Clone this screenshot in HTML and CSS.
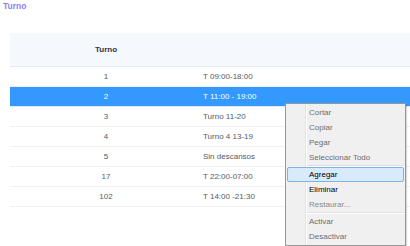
FILE: index.html
```html
<!DOCTYPE html>
<html lang="es">
<head>
<meta charset="utf-8">
<title>Turno</title>
<link rel="stylesheet" href="styles.css">
</head>
<body>
<div class="page">
  <div class="title">Turno</div>
  <div class="grid-wrap">
    <table class="grid">
      <thead>
        <tr><th class="c1">Turno</th><th class="c2"></th></tr>
      </thead>
      <tbody>
        <tr><td class="c1">1</td><td class="c2">T 09:00-18:00</td></tr>
        <tr class="sel"><td class="c1">2</td><td class="c2">T 11:00 - 19:00</td></tr>
        <tr><td class="c1">3</td><td class="c2">Turno 11-20</td></tr>
        <tr><td class="c1">4</td><td class="c2">Turno 4 13-19</td></tr>
        <tr><td class="c1">5</td><td class="c2">Sin descansos</td></tr>
        <tr><td class="c1">17</td><td class="c2">T 22:00-07:00</td></tr>
        <tr><td class="c1">102</td><td class="c2">T 14:00 -21:30</td></tr>
      </tbody>
    </table>
  </div>
  <div class="menu">
    <div class="item dis">Cortar</div>
    <div class="item dis">Copiar</div>
    <div class="item dis">Pegar</div>
    <div class="item dis">Seleccionar Todo</div>
    <div class="sep"></div>
    <div class="item hot">Agregar</div>
    <div class="item">Eliminar</div>
    <div class="item dis light">Restaurar...</div>
    <div class="sep"></div>
    <div class="item dis">Activar</div>
    <div class="item dis">Desactivar</div>
  </div>
</div>
</body>
</html>
```

FILE: styles.css
```css
html, body {
  margin: 0;
  padding: 0;
  background: #ffffff;
  overflow: hidden;
}
body {
  font-family: "Liberation Sans", Arial, sans-serif;
  font-size: 8px;
}
.page {
  position: relative;
  width: 410px;
  height: 246px;
}
.title {
  padding: 1px 0 0 3px;
  height: 12px;
  line-height: 11px;
  font-weight: bold;
  font-size: 8.5px;
  color: #8f7ef0;
}
.grid-wrap {
  margin: 20px 0 0 10px;
  width: 420px;
}
.grid {
  border-collapse: collapse;
  width: 420px;
}
.grid th {
  height: 33px;
  padding: 0;
  background: #f5f8fd;
  border-bottom: 1px solid #e2eaf4;
  font-weight: bold;
  color: #2e3440;
  font-size: 8px;
}
.grid td {
  height: 19px;
  padding: 0;
  border-bottom: 1px solid #eef0f4;
  color: #555a60;
  font-size: 8px;
}
.grid .c1 {
  width: 192px;
  text-align: center;
}
.grid .c2 {
  text-align: left;
  padding-left: 1px;
}
.grid tr.sel td {
  background: #3399ff;
  color: #ffffff;
  border-bottom-color: #dfe9f5;
}
.menu {
  position: absolute;
  left: 285px;
  top: 103px;
  width: 119px;
  padding: 1px 0;
  background: #f0f0f0;
  border: 1px solid #979797;
  box-shadow: 1px 1px 1px rgba(0,0,0,0.15);
  background-image: linear-gradient(to right, transparent 19px, #e2e3e3 19px, #e2e3e3 20px, #ffffff 20px, #ffffff 21px, transparent 21px);
}
.item {
  height: 15px;
  line-height: 15px;
  padding-left: 22px;
  color: #000000;
  font-size: 8px;
  box-sizing: border-box;
  margin: 0 1px;
}
.item.dis {
  color: #6d6d6d;
}
.item.light {
  color: #8a8a8a;
}
.item.hot {
  background: #d8eafb;
  border: 1px solid #7eb3e8;
  border-radius: 2px;
  line-height: 13px;
  padding-left: 21px;
}
.sep {
  height: 2px;
  margin-left: 21px;
  margin-right: 1px;
  box-sizing: border-box;
  border-top: 1px solid #e0e0e0;
  border-bottom: 1px solid #ffffff;
}
```
